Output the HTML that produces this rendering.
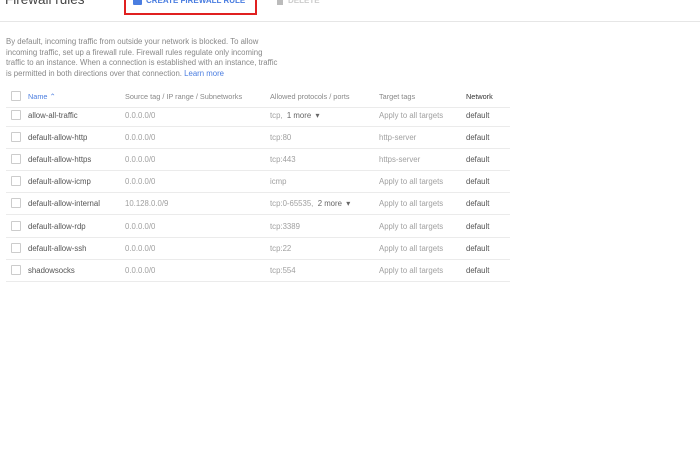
<!DOCTYPE html>
<html><head><style>
body{margin:0;width:700px;height:461px;background:#fff;font-family:"Liberation Sans",sans-serif;position:relative;overflow:hidden}
.a{position:absolute;white-space:nowrap}
.row{position:absolute;left:6px;width:504px;height:22px;border-bottom:1px solid #ebebeb;font-size:7.8px;color:#555}
.row span{position:absolute;top:7px}
.cb{position:absolute;left:5px;top:6px;width:8px;height:8px;border:1px solid #ccc;border-radius:1px}
.g{color:#a0a0a0}
</style></head><body>
<div class="a" style="left:5px;top:-8px;font-size:13.5px;color:#444">Firewall rules</div>
<div class="a" style="left:124px;top:-4px;width:133px;height:19px;border:2px solid #e02020;box-sizing:border-box"></div>
<div class="a" style="left:133px;top:-3px;width:9px;height:8px;background:#4a7de0;border-radius:1px"></div>
<div class="a" style="left:146px;top:-4px;font-size:8px;color:#4a7de0;font-weight:bold">CREATE FIREWALL RULE</div>
<div class="a" style="left:277px;top:-3px;width:6px;height:8px;background:#bbb"></div>
<div class="a" style="left:288px;top:-4px;font-size:8px;color:#ccc;font-weight:bold">DELETE</div>
<div class="a" style="left:0;top:21px;width:700px;height:1px;background:#e6e6e6"></div>
<div class="a" style="left:6px;top:37px;font-size:7.8px;line-height:10.6px;color:#888">By default, incoming traffic from outside your network is blocked. To allow<br>incoming traffic, set up a firewall rule. Firewall rules regulate only incoming<br>traffic to an instance. When a connection is established with an instance, traffic<br>is permitted in both directions over that connection. <span style="color:#4a7de0">Learn more</span></div>
<div class="row" style="top:85px;color:#888;font-size:7.3px">
<div class="cb"></div><span style="left:22px;color:#4a7de0">Name ⌃</span><span style="left:119px">Source tag / IP range / Subnetworks</span><span style="left:264px">Allowed protocols / ports</span><span style="left:373px">Target tags</span><span style="left:460px;color:#333">Network</span></div>
<div class="row" style="top:104px"><div class="cb"></div><span style="left:22px">allow-all-traffic</span><span class="g" style="left:119px">0.0.0.0/0</span><span class="g" style="left:264px">tcp, &nbsp;<span style="position:static;color:#666">1 more &nbsp;▾</span></span><span class="g" style="left:373px">Apply to all targets</span><span style="left:460px">default</span></div>
<div class="row" style="top:126px"><div class="cb"></div><span style="left:22px">default-allow-http</span><span class="g" style="left:119px">0.0.0.0/0</span><span class="g" style="left:264px">tcp:80</span><span class="g" style="left:373px">http-server</span><span style="left:460px">default</span></div>
<div class="row" style="top:148px"><div class="cb"></div><span style="left:22px">default-allow-https</span><span class="g" style="left:119px">0.0.0.0/0</span><span class="g" style="left:264px">tcp:443</span><span class="g" style="left:373px">https-server</span><span style="left:460px">default</span></div>
<div class="row" style="top:170px"><div class="cb"></div><span style="left:22px">default-allow-icmp</span><span class="g" style="left:119px">0.0.0.0/0</span><span class="g" style="left:264px">icmp</span><span class="g" style="left:373px">Apply to all targets</span><span style="left:460px">default</span></div>
<div class="row" style="top:192px"><div class="cb"></div><span style="left:22px">default-allow-internal</span><span class="g" style="left:119px">10.128.0.0/9</span><span class="g" style="left:264px">tcp:0-65535, &nbsp;<span style="position:static;color:#666">2 more &nbsp;▾</span></span><span class="g" style="left:373px">Apply to all targets</span><span style="left:460px">default</span></div>
<div class="row" style="top:215px"><div class="cb"></div><span style="left:22px">default-allow-rdp</span><span class="g" style="left:119px">0.0.0.0/0</span><span class="g" style="left:264px">tcp:3389</span><span class="g" style="left:373px">Apply to all targets</span><span style="left:460px">default</span></div>
<div class="row" style="top:237px"><div class="cb"></div><span style="left:22px">default-allow-ssh</span><span class="g" style="left:119px">0.0.0.0/0</span><span class="g" style="left:264px">tcp:22</span><span class="g" style="left:373px">Apply to all targets</span><span style="left:460px">default</span></div>
<div class="row" style="top:259px"><div class="cb"></div><span style="left:22px">shadowsocks</span><span class="g" style="left:119px">0.0.0.0/0</span><span class="g" style="left:264px">tcp:554</span><span class="g" style="left:373px">Apply to all targets</span><span style="left:460px">default</span></div>
</body></html>
